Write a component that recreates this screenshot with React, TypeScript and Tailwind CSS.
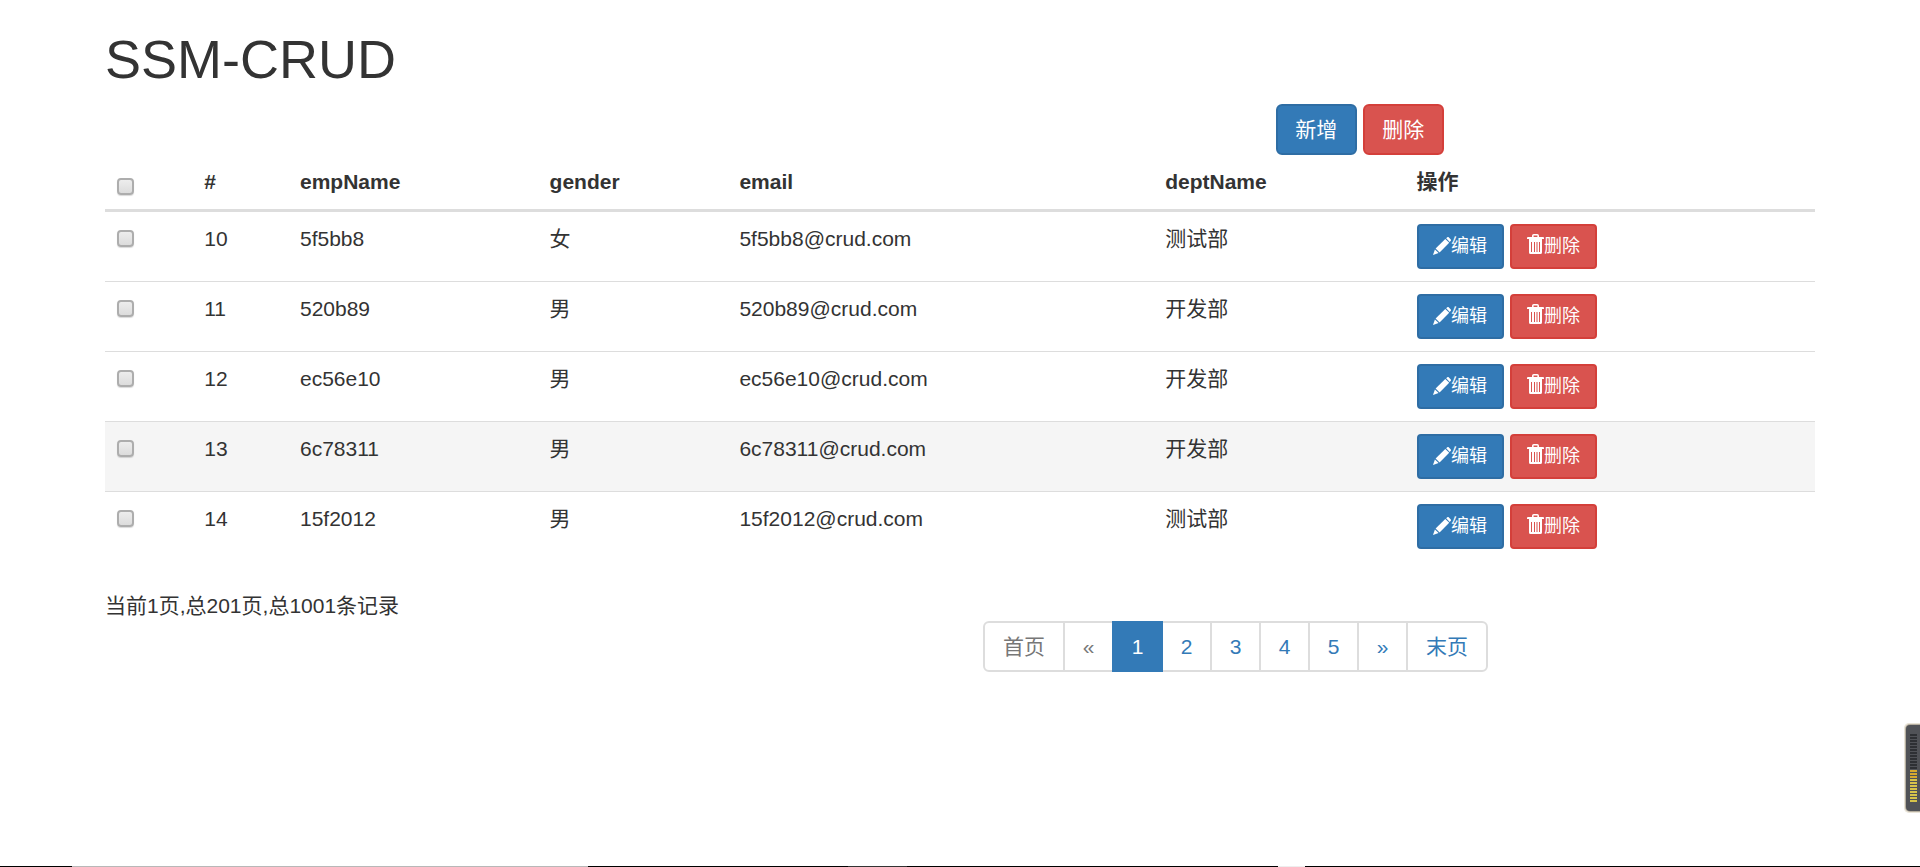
import type { ButtonHTMLAttributes } from 'react';

type Employee = { id: number; name: string; gender: string; email: string; dept: string };

const employees: Employee[] = [
  { id: 10, name: '5f5bb8', gender: '女', email: '5f5bb8@crud.com', dept: '测试部' },
  { id: 11, name: '520b89', gender: '男', email: '520b89@crud.com', dept: '开发部' },
  { id: 12, name: 'ec56e10', gender: '男', email: 'ec56e10@crud.com', dept: '开发部' },
  { id: 13, name: '6c78311', gender: '男', email: '6c78311@crud.com', dept: '开发部' },
  { id: 14, name: '15f2012', gender: '男', email: '15f2012@crud.com', dept: '测试部' },
];

const ACTIVE_ROW = 13;

type ButtonProps = ButtonHTMLAttributes<HTMLButtonElement> & {
  tone: 'primary' | 'danger';
  small?: boolean;
};

function Button({ tone, small, children, ...rest }: ButtonProps) {
  const color =
    tone === 'primary' ? 'bg-[#337ab7] border-[#2e6da4]' : 'bg-[#d9534f] border-[#d43f3a]';
  const size = small
    ? 'h-[45px] w-[87px] rounded-[4px] text-[18px] leading-[27px]'
    : 'h-[51px] w-[81px] rounded-[6px] text-[21px] leading-[30px]';
  return (
    <button
      type="button"
      className={`inline-flex items-center justify-center border-2 text-white ${color} ${size}`}
      {...rest}
    >
      {children}
    </button>
  );
}

function PencilIcon() {
  return (
    <svg viewBox="0 0 18 18" className="mb-[2px] size-[18px] shrink-0" fill="currentColor" aria-hidden="true">
      <path d="M13.2 1.300 14.300.2Q15-.3 15.700.3L17.800 2.400Q18.300 3.100 17.800 3.800L16.700 4.900Z" />
      <path d="M12.300 1.900 16.200 5.800 6.600 15.500 2.600 11.600Z" />
      <path d="M1.900 12.400 5.600 16.100 0 18Z" />
    </svg>
  );
}

function TrashIcon() {
  return (
    <svg viewBox="-1 0 18 20" className="mb-[6px] h-[20px] w-[18px] shrink-0" fill="currentColor" aria-hidden="true">
      <path
        fillRule="evenodd"
        d="M5 3V1.800Q5 0 6.800 0H10.200Q12 0 12 1.800V3H16Q17 3 17 4V5H0V4Q0 3 1 3ZM6.600 3H10.400V1.600H6.600Z"
      />
      <path
        fillRule="evenodd"
        d="M2 5H15V18.400Q15 20 13.400 20H3.600Q2 20 2 18.400ZM4 8V18H5V8ZM7 8V18H8V8ZM9.500 8V18H10.500V8ZM12 8V18H13V8Z"
      />
    </svg>
  );
}

function Checkbox({ label }: { label: string }) {
  return (
    <input
      type="checkbox"
      aria-label={label}
      className="block size-[17px] appearance-none rounded-[4px] border-2 border-[#adadad] bg-linear-to-b from-[#ededed] to-[#dcdcdc] shadow-[0_1px_1px_rgba(0,0,0,0.15)] checked:bg-[#337ab7]"
    />
  );
}

type PageItem = { label: string; state?: 'disabled' | 'active'; wide?: boolean; name?: string };

const pages: PageItem[] = [
  { label: '首页', state: 'disabled', wide: true },
  { label: '«', state: 'disabled', name: '上一页' },
  { label: '1', state: 'active' },
  { label: '2' },
  { label: '3' },
  { label: '4' },
  { label: '5' },
  { label: '»', name: '下一页' },
  { label: '末页', wide: true },
];

function Pagination() {
  return (
    <nav aria-label="分页">
      <ul className="flex">
        {pages.map(({ label, state, wide, name }) => {
          const tone =
            state === 'active'
              ? 'relative bg-[#337ab7] border-[#337ab7] text-white'
              : state === 'disabled'
                ? 'bg-white border-[#dddddd] text-[#777777]'
                : 'bg-white border-[#dddddd] text-[#337ab7]';
          return (
            <li key={label} className="group -ml-[2px] first:ml-0">
              <a
                href="#"
                aria-label={name}
                className={`flex h-[51px] items-center justify-center border-2 group-first:rounded-l-[6px] group-last:rounded-r-[6px] ${wide ? 'w-[82px]' : 'w-[51px]'} ${tone}`}
              >
                {label}
              </a>
            </li>
          );
        })}
      </ul>
    </nav>
  );
}

function LevelMeter() {
  const bars = Array.from({ length: 23 }, (_, i) => i);
  return (
    <svg
      viewBox="0 0 16 92"
      className="fixed right-0 bottom-[53px] h-[92px] w-[16px]"
      aria-hidden="true"
    >
      <rect x="0" y="1" width="22" height="90" rx="5" fill="#e9e4d8" />
      <rect x="1" y="2" width="22" height="88" rx="5" fill="#b5ae9f" />
      <rect x="2" y="3" width="22" height="86" rx="4" fill="#505257" />
      {bars.map((i) => (
        <rect
          key={i}
          x="6"
          y={12 + i * 3}
          width="7"
          height="2"
          fill={i < 12 ? '#2e3034' : i < 15 ? '#d9a92e' : '#d6c34a'}
        />
      ))}
    </svg>
  );
}

function BottomEdge() {
  return (
    <div className="fixed inset-x-0 bottom-0 flex h-px bg-black" aria-hidden="true">
      <div className="w-[3.75%]" />
      <div className="w-[26.9%] bg-[#b8b8b8]" />
      <div className="w-[13.5%]" />
      <div className="w-[3.1%] bg-[#333333]" />
      <div className="w-[19.3%]" />
      <div className="w-[1.4%] bg-[#eeeeee]" />
    </div>
  );
}

export default function App() {
  return (
    <div className="min-h-screen bg-white font-['Liberation_Sans','Noto_Sans_CJK_SC',sans-serif] text-[21px] leading-[30px] text-[#333333]">
      <main className="mx-auto max-w-[1756px] px-[23px] pt-[30px]">
        <h1 className="mb-[15px] text-[54px] leading-[59px]">SSM-CRUD</h1>

        <div className="-mx-[23px] grid grid-cols-12">
          <div className="col-span-4 col-start-9 flex gap-[6px] px-[23px]">
            <Button tone="primary">新增</Button>
            <Button tone="danger">删除</Button>
          </div>
        </div>

        <table className="mb-[30px] w-full table-fixed border-separate border-spacing-0 text-left">
          <colgroup>
            <col className="w-[5.1%]" />
            <col className="w-[5.6%]" />
            <col className="w-[14.6%]" />
            <col className="w-[11.1%]" />
            <col className="w-[24.9%]" />
            <col className="w-[14.7%]" />
            <col />
          </colgroup>
          <thead>
            <tr className="[&>th]:border-b-3 [&>th]:border-[#dddddd] [&>th]:p-[12px] [&>th]:align-top">
              <th>
                <div className="pt-[11px]">
                  <Checkbox label="全选" />
                </div>
              </th>
              <th>#</th>
              <th>empName</th>
              <th>gender</th>
              <th>email</th>
              <th>deptName</th>
              <th>操作</th>
            </tr>
          </thead>
          <tbody>
            {employees.map((e) => (
              <tr
                key={e.id}
                className={`[&>td]:border-t [&>td]:border-[#dddddd] [&>td]:p-[12px] [&>td]:align-top first:[&>td]:border-t-0 hover:bg-[#f5f5f5] ${e.id === ACTIVE_ROW ? 'bg-[#f5f5f5]' : ''}`}
              >
                <td>
                  <div className="pt-[6px]">
                    <Checkbox label={`选择 ${e.name}`} />
                  </div>
                </td>
                <td>{e.id}</td>
                <td>{e.name}</td>
                <td>{e.gender}</td>
                <td>{e.email}</td>
                <td>{e.dept}</td>
                <td>
                  <div className="flex gap-[6px]">
                    <Button tone="primary" small>
                      <PencilIcon />
                      编辑
                    </Button>
                    <Button tone="danger" small>
                      <TrashIcon />
                      删除
                    </Button>
                  </div>
                </td>
              </tr>
            ))}
          </tbody>
        </table>

        <p>当前1页,总201页,总1001条记录</p>

        <div className="-mx-[23px] grid grid-cols-12">
          <div className="col-span-6 col-start-7 px-[23px]">
            <Pagination />
          </div>
        </div>
      </main>
      <LevelMeter />
      <BottomEdge />
    </div>
  );
}
